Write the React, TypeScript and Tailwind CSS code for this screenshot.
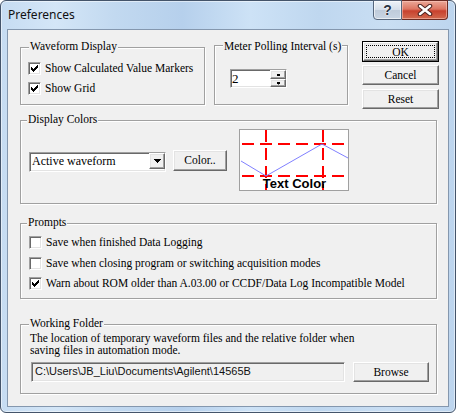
import React from "react";

const serif = "font-['Liberation_Serif',serif] text-[11.5px] text-black";
const sunken =
  "border border-[#a0a0a0] border-r-white border-b-white shadow-[inset_1px_1px_0_#696969,inset_-1px_-1px_0_#e3e3e3]";
const raised =
  "border border-white border-r-[#696969] border-b-[#696969] shadow-[inset_-1px_-1px_0_#a0a0a0,inset_1px_1px_0_#e3e3e3] bg-[#f0f0f0]";

function Check({ checked }: { checked: boolean }) {
  return (
    <span className={`relative block w-[13px] h-[13px] shrink-0 bg-white ${sunken}`}>
      {checked && (
        <svg className="absolute left-0 top-0" width="11" height="11" viewBox="0 0 11 11" shapeRendering="crispEdges">
          <path
            d="M2 4h1v3h-1zM3 5h1v3h-1zM4 6h1v3h-1zM5 5h1v3h-1zM6 4h1v3h-1zM7 3h1v3h-1zM8 2h1v3h-1z"
            fill="#000"
          />
        </svg>
      )}
    </span>
  );
}

function CheckRow({ checked, label, className = "" }: { checked: boolean; label: string; className?: string }) {
  return (
    <div className={`flex items-center h-[13px] ${className}`}>
      <Check checked={checked} />
      <span className={`ml-[4px] leading-[13px] whitespace-nowrap ${serif}`}>{label}</span>
    </div>
  );
}

function Group({
  label,
  labelClass,
  className,
  children,
}: {
  label: string;
  labelClass: string;
  className: string;
  children?: React.ReactNode;
}) {
  return (
    <div
      className={`relative shrink-0 border border-[#a0a0a0] shadow-[inset_1px_1px_0_#fff,1px_1px_0_#fff] ${className}`}
    >
      <span className={`absolute bg-[#f0f0f0] px-px leading-[13px] whitespace-nowrap ${serif} ${labelClass}`}>
        {label}
      </span>
      {children}
    </div>
  );
}

function Button({ label, className = "", isDefault = false }: { label: string; className?: string; isDefault?: boolean }) {
  if (isDefault) {
    return (
      <div className={`border border-black ${className}`}>
        <div className={`h-full flex p-[2px] ${raised}`}>
          <span className={`flex-1 flex items-center justify-center border border-dotted border-black leading-[12px] ${serif}`}>
            {label}
          </span>
        </div>
      </div>
    );
  }
  return (
    <div className={`flex items-center justify-center leading-[13px] ${raised} ${serif} ${className}`}>{label}</div>
  );
}

function Arrow({ up = false }: { up?: boolean }) {
  return (
    <svg width="7" height="4" viewBox="0 0 7 4" shapeRendering="crispEdges">
      <path d={up ? "M3 0h1v1h-1zM2 1h3v1h-3zM1 2h5v1h-5z" : "M0 0h7v1h-7zM1 1h5v1h-5zM2 2h3v1h-3zM3 3h1v1h-1z"} fill="#000" />
    </svg>
  );
}

function Preview() {
  return (
    <div className="mt-[8px] ml-[12px] w-[110px] h-[62px] border border-[#a0a0a0] bg-white">
      <svg width="108" height="60" viewBox="0 0 108 60">
        <g stroke="#ff0000" strokeWidth="2" strokeDasharray="12 6">
          <line x1="0" y1="14" x2="108" y2="14" strokeDashoffset="-2" />
          <line x1="0" y1="46" x2="108" y2="46" strokeDashoffset="-2" />
          <line x1="26" y1="0" x2="26" y2="60" strokeDashoffset="0" />
          <line x1="83" y1="0" x2="83" y2="60" strokeDashoffset="0" />
        </g>
        <polyline points="1,31 26,46 82,14 108,28" fill="none" stroke="#8080ff" strokeWidth="1" />
        <text
          x="54.5"
          y="58"
          textAnchor="middle"
          fontFamily="'Liberation Sans', Arial, sans-serif"
          fontWeight="bold"
          fontSize="13"
          fill="#000"
        >
          Text Color
        </text>
      </svg>
    </div>
  );
}

export default function App() {
  return (
    <div className="w-[456px] h-[413px] flex flex-col rounded-[6px] border border-[#44546a] px-[6px] pb-[5px] bg-[linear-gradient(90deg,#c6dcf2_0%,#d4e6f7_12%,#c2d9f0_25%,#b6d0ec_40%,#cde2f6_55%,#bfd7ef_70%,#c9def3_85%,#bdd5ee_100%)] shadow-[inset_0_0_0_1px_rgba(255,255,255,0.5)]">
      <div className="h-[28px] flex items-start shrink-0">
        <span className="pl-[1px] mt-[6px] font-['Noto_Sans',sans-serif] text-[12px] leading-[16px] text-[#111]">
          Preferences
        </span>
        <div className="ml-auto mr-[1px] -mt-px flex h-[20px]">
          <div className="w-[29px] h-full flex items-center justify-center rounded-bl-[4px] border border-[#56667c] bg-[linear-gradient(#eef3f8,#d5dee9_50%,#bfcbda_51%,#c9d5e3)] shadow-[inset_0_0_0_1px_rgba(255,255,255,0.6)]">
            <span className="font-['Liberation_Sans',sans-serif] font-bold text-[14px] leading-[14px] text-[#2a3442] [text-shadow:0_0_2px_#fff,0_0_1px_#fff]">
              ?
            </span>
          </div>
          <div className="w-[46px] h-full flex items-center justify-center rounded-br-[4px] border border-l-0 border-[#6a2a22] bg-[linear-gradient(#eba898,#dd7561_45%,#c8412e_55%,#d26a4f)] shadow-[inset_0_0_0_1px_rgba(255,210,200,0.5)]">
            <svg width="16" height="12" viewBox="0 0 16 12">
              <path d="M3 2L13 10M13 2L3 10" stroke="#4b2320" strokeWidth="4.5" strokeLinecap="round" />
              <path d="M3 2L13 10M13 2L3 10" stroke="#fff" strokeWidth="2.5" strokeLinecap="round" />
            </svg>
          </div>
        </div>
      </div>

      <div className="flex-1 flex flex-col border border-[#8497ae] bg-[#f0f0f0] pl-[12px] pt-[10px]">
        <div className="flex items-start h-[80px] shrink-0">
          <Group label="Waveform Display" labelClass="left-[8px] top-[-8px]" className="mt-[7px] w-[185px] h-[58px]">
            <div className="pl-[7px] pt-[14px]">
              <CheckRow checked label="Show Calculated Value Markers" />
              <CheckRow checked label="Show Grid" className="mt-[7px]" />
            </div>
          </Group>
          <Group label="Meter Polling Interval (s)" labelClass="left-[8px] top-[-6px]" className="ml-[9px] mt-[5px] w-[134px] h-[60px]">
            <div className={`ml-[15px] mt-[23px] w-[57px] h-[19px] flex bg-white ${sunken}`}>
              <span className={`flex-1 pl-[1px] leading-[17px] ${serif} text-[13px]`}>2</span>
              <div className="w-[16px] flex flex-col">
                <div className={`h-[9px] flex items-center justify-center ${raised}`}>
                  <span className="scale-75 flex">
                    <Arrow up />
                  </span>
                </div>
                <div className={`h-[8px] flex items-center justify-center ${raised}`}>
                  <span className="scale-75 flex">
                    <Arrow />
                  </span>
                </div>
              </div>
            </div>
          </Group>
          <div className="ml-[14px] mt-[1px] w-[77px] flex flex-col">
            <Button label="OK" isDefault className="h-[21px]" />
            <Button label="Cancel" className="h-[20px] mt-[3px]" />
            <Button label="Reset" className="h-[20px] mt-[4px]" />
          </div>
        </div>

        <Group label="Display Colors" labelClass="left-[6px] top-[-8px]" className="w-[417px] h-[84px]">
          <div className="flex items-start pl-[8px]">
            <div className={`mt-[31px] w-[137px] h-[20px] flex bg-white ${sunken}`}>
              <span className={`flex-1 pl-[2px] leading-[16px] whitespace-nowrap ${serif} text-[12px]`}>Active waveform</span>
              <div className={`w-[16px] h-[16px] flex items-center justify-center ${raised}`}>
                <Arrow />
              </div>
            </div>
            <Button label="Color.." className="mt-[29px] ml-[7px] w-[54px] h-[21px]" />
            <Preview />
          </div>
        </Group>

        <Group label="Prompts" labelClass="left-[6px] top-[-8px]" className="mt-[19px] w-[417px] h-[76px]">
          <div className="pl-[8px] pt-[12px]">
            <CheckRow checked={false} label="Save when finished Data Logging" />
            <CheckRow checked={false} label="Save when closing program or switching acquisition modes" className="mt-[8px]" />
            <CheckRow checked label="Warn about ROM older than A.03.00 or CCDF/Data Log Incompatible Model" className="mt-[7px]" />
          </div>
        </Group>

        <Group label="Working Folder" labelClass="left-[8px] top-[-8px]" className="mt-[25px] w-[417px] h-[70px]">
          <p className={`ml-[9px] mt-[7px] leading-[12px] w-[340px] ${serif}`}>
            The location of temporary waveform files and the relative folder when saving files in automation mode.
          </p>
          <div className="flex ml-[10px] mt-[6px]">
            <div className={`w-[314px] h-[20px] flex items-start pt-[1px] pl-[3px] ${sunken}`}>
              <span className="font-['Liberation_Sans',sans-serif] text-[11px] leading-[14px] text-[#111] whitespace-nowrap">
                C:\Users\JB_Liu\Documents\Agilent\14565B
              </span>
            </div>
            <Button label="Browse" className="ml-[8px] w-[76px] h-[20px]" />
          </div>
        </Group>
      </div>
    </div>
  );
}
